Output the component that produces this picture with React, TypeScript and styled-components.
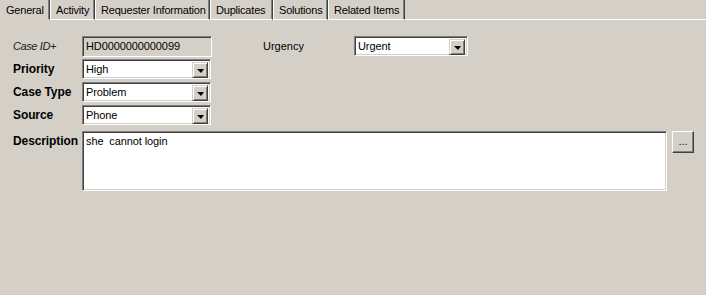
import React from "react";
import styled, { createGlobalStyle } from "styled-components";

const FACE = "#d4d0c8";
const SHADOW = "#808080";
const DARK = "#404040";

const GlobalStyle = createGlobalStyle`
  html, body {
    margin: 0;
    padding: 0;
    background: ${FACE};
  }
  body {
    font-family: "Liberation Sans", Arial, sans-serif;
    font-size: 11px;
    color: #000;
  }
`;

const Page = styled.div`
  width: 706px;
  height: 295px;
  background: ${FACE};
  overflow: hidden;
  display: flex;
  flex-direction: column;
`;

const TabStrip = styled.div`
  display: flex;
  height: 20px;
`;

const Tab = styled.div<{ $width: number; $active?: boolean }>`
  box-sizing: border-box;
  width: ${(p) => p.$width}px;
  height: 20px;
  padding: 4px 0 0 ${(p) => (p.$active ? 6 : 5)}px;
  border-left: ${(p) => (p.$active ? "none" : "1px solid #fff")};
  border-right: 1px solid ${DARK};
  border-bottom: ${(p) => (p.$active ? "1px solid transparent" : "1px solid #fff")};
  box-shadow: inset -1px 0 ${SHADOW};
  white-space: nowrap;
  line-height: 12px;
  letter-spacing: -0.2px;
`;

const TabFiller = styled.div`
  flex: 1;
  border-bottom: 1px solid #fff;
`;

const Body = styled.div`
  padding: 16px 0 0 12px;
  display: flex;
  flex-direction: column;
  gap: 3px;
`;

const Row = styled.div<{ $top?: number }>`
  display: flex;
  align-items: flex-start;
  margin-top: ${(p) => p.$top ?? 0}px;
`;

const Label = styled.div<{ $italic?: boolean; $bold?: boolean }>`
  width: 70px;
  line-height: 20px;
  font-size: ${(p) => (p.$bold ? 12 : 11)}px;
  font-weight: ${(p) => (p.$bold ? 700 : 400)};
  font-style: ${(p) => (p.$italic ? "italic" : "normal")};
  color: ${(p) => (p.$italic ? "#202020" : "#000")};
  letter-spacing: ${(p) => (p.$italic ? "-0.4px" : "-0.1px")};
  padding-left: 1px;
  box-sizing: border-box;
  white-space: nowrap;
`;

const Sunken = styled.div<{ $width: number; $height: number; $readOnly?: boolean }>`
  box-sizing: border-box;
  width: ${(p) => p.$width}px;
  height: ${(p) => p.$height}px;
  border-top: 1px solid ${SHADOW};
  border-left: 1px solid ${SHADOW};
  border-right: 1px solid #fff;
  border-bottom: 1px solid #fff;
  box-shadow: inset 1px 1px ${DARK}, inset -1px -1px ${FACE};
  background: ${(p) => (p.$readOnly ? FACE : "#fff")};
  display: flex;
  align-items: flex-start;
  padding: 2px;
`;

const FieldText = styled.div`
  flex: 1;
  padding: 1px 0 0 1px;
  line-height: 13px;
  white-space: pre;
  letter-spacing: -0.1px;
`;

const DropButton = styled.div`
  box-sizing: border-box;
  width: 16px;
  height: 16px;
  border-top: 1px solid ${FACE};
  border-left: 1px solid ${FACE};
  border-right: 1px solid ${DARK};
  border-bottom: 1px solid ${DARK};
  box-shadow: inset 1px 1px #fff, inset -1px -1px ${SHADOW};
  background: ${FACE};
  display: flex;
  align-items: center;
  justify-content: center;
`;

const Arrow = styled.div`
  width: 0;
  height: 0;
  border-left: 4px solid transparent;
  border-right: 3px solid transparent;
  border-top: 4px solid #000;
  margin-top: 1px;
`;

const UrgencyLabel = styled.div`
  width: 91px;
  margin-left: 51px;
  line-height: 20px;
`;

const EllipsisButton = styled.div`
  box-sizing: border-box;
  width: 22px;
  height: 22px;
  margin-left: 5px;
  border-top: 1px solid #fff;
  border-left: 1px solid #fff;
  border-right: 1px solid ${DARK};
  border-bottom: 1px solid ${DARK};
  box-shadow: inset -1px -1px ${SHADOW};
  background: ${FACE};
  display: flex;
  align-items: center;
  justify-content: center;
  font-size: 11px;
  line-height: 11px;
  padding-bottom: 2px;
`;

function Select({ value, width }: { value: string; width: number }) {
  return (
    <Sunken $width={width} $height={20}>
      <FieldText>{value}</FieldText>
      <DropButton>
        <Arrow />
      </DropButton>
    </Sunken>
  );
}

const tabs = [
  { name: "General", width: 50 },
  { name: "Activity", width: 45 },
  { name: "Requester Information", width: 115 },
  { name: "Duplicates", width: 63 },
  { name: "Solutions", width: 55 },
  { name: "Related Items", width: 77 },
];

export default function App() {
  return (
    <Page>
      <GlobalStyle />
      <TabStrip>
        {tabs.map((t, i) => (
          <Tab key={t.name} $width={t.width} $active={i === 0}>
            {t.name}
          </Tab>
        ))}
        <TabFiller />
      </TabStrip>
      <Body>
        <Row>
          <Label $italic>Case ID+</Label>
          <Sunken $width={130} $height={21} $readOnly>
            <FieldText>HD0000000000099</FieldText>
          </Sunken>
          <UrgencyLabel>Urgency</UrgencyLabel>
          <Select value="Urgent" width={114} />
        </Row>
        <Row $top={-1}>
          <Label $bold>Priority</Label>
          <Select value="High" width={129} />
        </Row>
        <Row>
          <Label $bold>Case Type</Label>
          <Select value="Problem" width={129} />
        </Row>
        <Row>
          <Label $bold>Source</Label>
          <Select value="Phone" width={129} />
        </Row>
        <Row $top={3}>
          <Label $bold>Description</Label>
          <Sunken $width={585} $height={60}>
            <FieldText>she  cannot login</FieldText>
          </Sunken>
          <EllipsisButton>...</EllipsisButton>
        </Row>
      </Body>
    </Page>
  );
}
